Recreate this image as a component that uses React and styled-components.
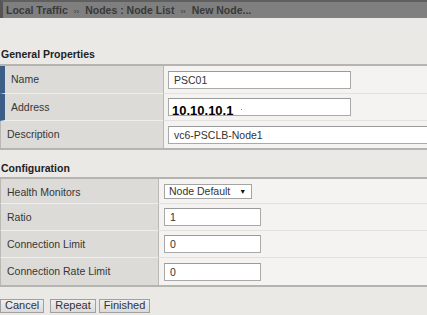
import React from "react";
import styled, { createGlobalStyle } from "styled-components";

const GlobalStyle = createGlobalStyle`
  html, body {
    margin: 0;
    padding: 0;
    background: #ebe9e5;
    font-family: "Liberation Sans", Arial, sans-serif;
    overflow: hidden;
  }
`;

const Page = styled.div`
  width: 427px;
  height: 315px;
  overflow: hidden;
  background: #ebe9e5;
`;

const Crumbs = styled.div`
  height: 16px;
  border-top: 2px solid #5f5f5f;
  border-left: 3px solid #555;
  background: #7f7f7f;
  font-size: 10.5px;
  font-weight: bold;
  line-height: 16px;
  padding-left: 3px;
  white-space: nowrap;
`;

const Crumb = styled.span`
  color: #393939;
`;

const Sep = styled.span`
  color: #4a4a4a;
  font-size: 8px;
  margin: 0 6px;
`;

const SectionTitle = styled.div`
  font-size: 10.5px;
  font-weight: bold;
  color: #222;
  padding-left: 1px;
  margin-top: ${(p) => p.$top}px;
  height: 13px;
  line-height: 13px;
  margin-bottom: ${(p) => p.$gap}px;
`;

const Table = styled.div`
  display: grid;
  grid-template-columns: ${(p) => p.$label}px 1fr;
  border-top: 2px solid #b5b4b1;
  border-bottom: 2px solid #b5b4b1;
`;

const Label = styled.div`
  height: ${(p) => p.$h}px;
  box-sizing: border-box;
  background: #dcdbd8;
  border-right: 1px solid #b9b8b5;
  border-bottom: ${(p) => (p.$last ? "none" : "1px solid #efeeec")};
  border-left: ${(p) => (p.$accent ? "5px solid #3d5f87" : "1px solid #b9b8b5")};
  padding-left: 6px;
  padding-top: 7px;
  font-size: 10.5px;
  color: #363636;
`;

const Value = styled.div`
  height: ${(p) => p.$h}px;
  box-sizing: border-box;
  background: #f4f3f1;
  border-bottom: ${(p) => (p.$last ? "none" : "1px solid #e2e1de")};
  padding-left: ${(p) => p.$pad}px;
  display: flex;
  align-items: center;
  overflow: hidden;
`;

const TextBox = styled.div`
  position: relative;
  width: ${(p) => p.$w}px;
  height: 18px;
  box-sizing: border-box;
  flex-shrink: 0;
  background: #fff;
  border: 1px solid #a9a9a9;
  border-top-color: #9a9a9a;
  font-size: 10.5px;
  color: #333;
  padding-left: 5px;
  line-height: 16px;
  white-space: nowrap;
`;

const BigText = styled.span`
  position: absolute;
  left: 3px;
  bottom: -2px;
  font-size: 13px;
  font-weight: bold;
  color: #000;
  line-height: 13px;
`;

const Speck = styled.span`
  position: absolute;
  left: 72px;
  top: 10px;
  width: 1px;
  height: 1px;
  background: #888;
`;

const Select = styled.div`
  width: 88px;
  height: 15px;
  box-sizing: border-box;
  background: #fff;
  border: 1px solid #a4a4a4;
  font-size: 10.5px;
  color: #333;
  line-height: 13px;
  padding-left: 4px;
  white-space: nowrap;
  display: flex;
  gap: 9px;
  span {
    font-size: 7px;
    color: #111;
  }
`;

const Buttons = styled.div`
  display: flex;
  margin-top: 12px;
`;

const Button = styled.button`
  height: 11px;
  box-sizing: content-box;
  padding: 0 4px 1px;
  margin: 0 0 0 ${(p) => p.$ml}px;
  font-family: "Liberation Sans", Arial, sans-serif;
  font-size: 11px;
  line-height: 11px;
  color: #333;
  background: linear-gradient(#efefef, #dadada);
  border: 1px solid #a0a0a0;
  border-radius: 0;
`;

export default function App() {
  return (
    <Page>
      <GlobalStyle />
      <Crumbs>
        <Crumb>Local Traffic</Crumb>
        <Sep>››</Sep>
        <Crumb>Nodes : Node List</Crumb>
        <Sep>››</Sep>
        <Crumb>New Node...</Crumb>
      </Crumbs>

      <SectionTitle $top={30} $gap={3}>General Properties</SectionTitle>
      <Table $label={164}>
        <Label $h={28} $accent>Name</Label>
        <Value $h={28} $pad={4}>
          <TextBox $w={183}>PSC01</TextBox>
        </Value>
        <Label $h={27} $accent>Address</Label>
        <Value $h={27} $pad={4}>
          <TextBox $w={183}>
            <BigText>10.10.10.1</BigText>
            <Speck />
          </TextBox>
        </Value>
        <Label $h={27} $last>Description</Label>
        <Value $h={27} $pad={4} $last>
          <TextBox $w={270}>vc6-PSCLB-Node1</TextBox>
        </Value>
      </Table>

      <SectionTitle $top={12} $gap={2}>Configuration</SectionTitle>
      <Table $label={159}>
        <Label $h={25}>Health Monitors</Label>
        <Value $h={25} $pad={5}>
          <Select>
            Node Default<span>▼</span>
          </Select>
        </Value>
        <Label $h={27}>Ratio</Label>
        <Value $h={27} $pad={5}>
          <TextBox $w={97}>1</TextBox>
        </Value>
        <Label $h={27}>Connection Limit</Label>
        <Value $h={27} $pad={5}>
          <TextBox $w={97}>0</TextBox>
        </Value>
        <Label $h={27} $last>Connection Rate Limit</Label>
        <Value $h={27} $pad={5} $last>
          <TextBox $w={97}>0</TextBox>
        </Value>
      </Table>

      <Buttons>
        <Button $ml={0}>Cancel</Button>
        <Button $ml={6}>Repeat</Button>
        <Button $ml={3}>Finished</Button>
      </Buttons>
    </Page>
  );
}
